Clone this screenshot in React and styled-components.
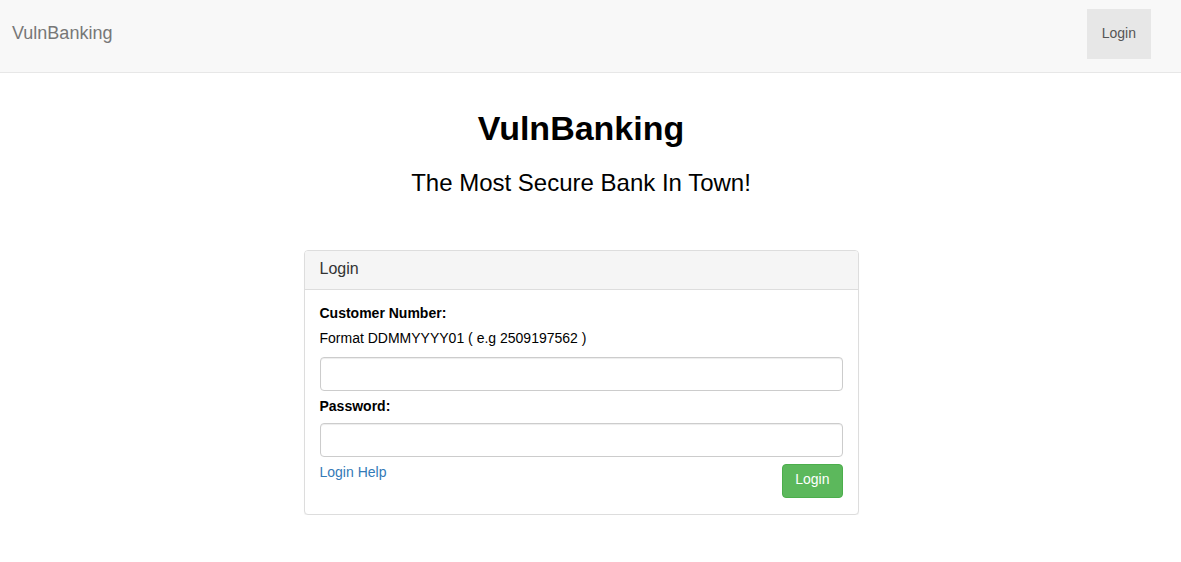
import React from "react";
import styled, { createGlobalStyle } from "styled-components";

const Global = createGlobalStyle`
  * { box-sizing: border-box; }
  html, body { margin: 0; padding: 0; background: #fff; }
  body {
    font-family: "Liberation Sans", Arial, Helvetica, sans-serif;
    font-size: 14px;
    line-height: 1.42857;
    color: #000;
  }
`;

const Navbar = styled.nav`
  display: flex;
  align-items: flex-start;
  justify-content: space-between;
  height: 73px;
  padding: 9px 30px 0 12px;
  background: #f8f8f8;
  border-bottom: 1px solid #e7e7e7;
`;

const Brand = styled.a`
  display: block;
  height: 50px;
  padding: 14px 0 16px;
  font-size: 18px;
  line-height: 20px;
  color: #777;
  text-decoration: none;
`;

const NavButton = styled.a`
  display: block;
  height: 50px;
  padding: 14px 15px 16px;
  font-size: 14px;
  line-height: 20px;
  color: #555;
  background: #e7e7e7;
  text-decoration: none;
`;

const Main = styled.main`
  display: flex;
  flex-direction: column;
  align-items: center;
  padding-right: 19px;
`;

const Title = styled.h1`
  margin: 37px 0 0;
  font-size: 34px;
  font-weight: 700;
  line-height: 1.1;
  color: #000;
`;

const Subtitle = styled.h3`
  margin: 23px 0 0;
  font-size: 24px;
  font-weight: 400;
  line-height: 1.1;
  color: #000;
`;

const Panel = styled.section`
  width: 555px;
  margin-top: 53px;
  border: 1px solid #ddd;
  border-radius: 4px;
  background: #fff;
  box-shadow: 0 1px 1px rgba(0, 0, 0, 0.05);
`;

const PanelHeading = styled.div`
  padding: 7px 15px 10px;
  background: #f5f5f5;
  border-bottom: 1px solid #ddd;
  border-radius: 3px 3px 0 0;
  font-size: 16px;
  line-height: 21px;
  color: #333;
`;

const PanelBody = styled.form`
  display: flex;
  flex-direction: column;
  padding: 14px 15px 16px;
`;

const Label = styled.label`
  display: block;
  font-weight: 700;
  margin-bottom: ${(p) => p.$mb ?? 5}px;
`;

const Hint = styled.div`
  margin-bottom: 8px;
`;

const Input = styled.input`
  display: block;
  width: 100%;
  height: 34px;
  padding: 6px 12px;
  font: inherit;
  border: 1px solid #ccc;
  border-radius: 4px;
  box-shadow: inset 0 1px 1px rgba(0, 0, 0, 0.075);
  margin-bottom: ${(p) => p.$mb || 0}px;
`;

const Footer = styled.div`
  display: flex;
  justify-content: space-between;
  align-items: flex-start;
  margin-top: 6px;
`;

const HelpLink = styled.a`
  color: #337ab7;
  text-decoration: none;
`;

const Button = styled.button`
  margin-top: 1px;
  height: 34px;
  padding: 5px 12px 7px;
  font: inherit;
  color: #fff;
  background: #5cb85c;
  border: 1px solid #4cae4c;
  border-radius: 4px;
  cursor: pointer;
`;

export default function App() {
  return (
    <>
      <Global />
      <Navbar>
        <Brand href="#">VulnBanking</Brand>
        <NavButton href="#">Login</NavButton>
      </Navbar>
      <Main>
        <Title>VulnBanking</Title>
        <Subtitle>The Most Secure Bank In Town!</Subtitle>
        <Panel>
          <PanelHeading>Login</PanelHeading>
          <PanelBody onSubmit={(e) => e.preventDefault()}>
            <Label>Customer Number:</Label>
            <Hint>Format DDMMYYYY01 ( e.g 2509197562 )</Hint>
            <Input type="text" $mb={6} />
            <Label $mb={6}>Password:</Label>
            <Input type="password" />
            <Footer>
              <HelpLink href="#">Login Help</HelpLink>
              <Button type="submit">Login</Button>
            </Footer>
          </PanelBody>
        </Panel>
      </Main>
    </>
  );
}
